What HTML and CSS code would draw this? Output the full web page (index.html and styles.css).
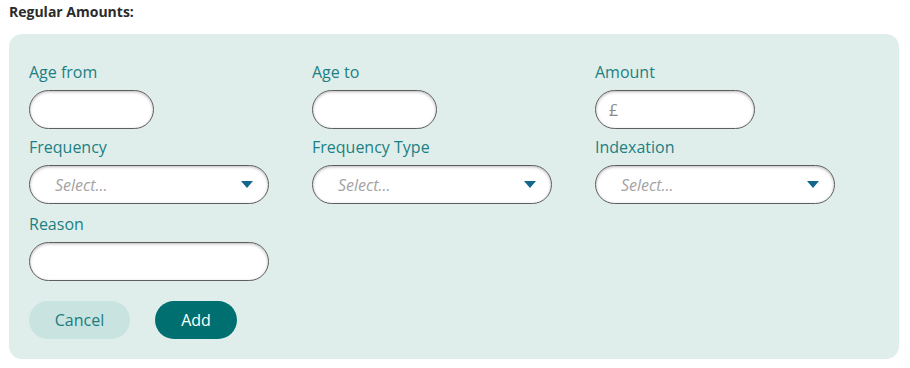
FILE: index.html
```html
<!DOCTYPE html>
<html>
<head>
<meta charset="utf-8">
<link rel="stylesheet" href="styles.css">
</head>
<body>
<h2 class="title">Regular Amounts:</h2>
<div class="panel">
  <div class="grid">
    <div class="field">
      <label class="lbl">Age from</label>
      <div class="inp w-s"></div>
    </div>
    <div class="field">
      <label class="lbl">Age to</label>
      <div class="inp w-s"></div>
    </div>
    <div class="field">
      <label class="lbl">Amount</label>
      <div class="inp w-m"><span class="cur">£</span></div>
    </div>
    <div class="field">
      <label class="lbl">Frequency</label>
      <div class="inp sel w-l"><span class="ph">Select...</span><span class="caret"></span></div>
    </div>
    <div class="field">
      <label class="lbl">Frequency Type</label>
      <div class="inp sel w-l"><span class="ph">Select...</span><span class="caret"></span></div>
    </div>
    <div class="field">
      <label class="lbl">Indexation</label>
      <div class="inp sel w-l"><span class="ph">Select...</span><span class="caret"></span></div>
    </div>
    <div class="field last">
      <label class="lbl">Reason</label>
      <div class="inp w-l"></div>
    </div>
  </div>
  <div class="actions">
    <button class="btn cancel">Cancel</button>
    <button class="btn add">Add</button>
  </div>
</div>
</body>
</html>
```
FILE: styles.css
```css
html, body {
  margin: 0;
  padding: 0;
  background: #ffffff;
}
body {
  padding: 0 11px 0 9px;
  font-family: "Open Sans", "Liberation Sans", sans-serif;
}
.title {
  margin: 0;
  padding-top: 2px;
  height: 32px;
  font-size: 14px;
  line-height: 19px;
  font-weight: 700;
  color: #2b2b2b;
}
.panel {
  background: #e0eeeb;
  border-radius: 13px;
  padding: 28px 20px 20px 20px;
  height: 277px;
  box-sizing: content-box;
}
.grid {
  display: grid;
  grid-template-columns: 283px 283px 1fr;
  row-gap: 8px;
}
.field {
  display: flex;
  flex-direction: column;
}
.lbl {
  font-size: 16px;
  line-height: 20px;
  color: #1b8083;
  margin-bottom: 8px;
}
.inp {
  height: 39px;
  box-sizing: border-box;
  border: 1px solid #5e5e5e;
  border-radius: 20px;
  background: #ffffff;
  box-shadow: inset 0 1px 3px rgba(0,0,0,0.28);
  display: flex;
  align-items: center;
  font-size: 16px;
}
.w-s { width: 125px; }
.w-m { width: 160px; }
.w-l { width: 240px; }
.cur {
  padding-left: 13px;
  color: #8a8a8a;
  font-size: 16px;
}
.sel {
  justify-content: space-between;
  padding: 0 15px 0 25px;
}
.ph {
  font-style: italic;
  color: #a3a3a3;
}
.caret {
  width: 0;
  height: 0;
  border-left: 6px solid transparent;
  border-right: 6px solid transparent;
  border-top: 7px solid #13678a;
}
.field.last {
  margin-top: 2px;
}
.actions {
  display: flex;
  gap: 25px;
  margin-top: 20px;
}
.btn {
  height: 38px;
  border: none;
  border-radius: 19px;
  font-family: "Open Sans", "Liberation Sans", sans-serif;
  font-size: 16px;
  padding: 0;
}
.cancel {
  width: 101px;
  background: #c8e3e0;
  color: #1d7b7e;
}
.add {
  width: 82px;
  background: #006f6f;
  color: #ffffff;
}
```
